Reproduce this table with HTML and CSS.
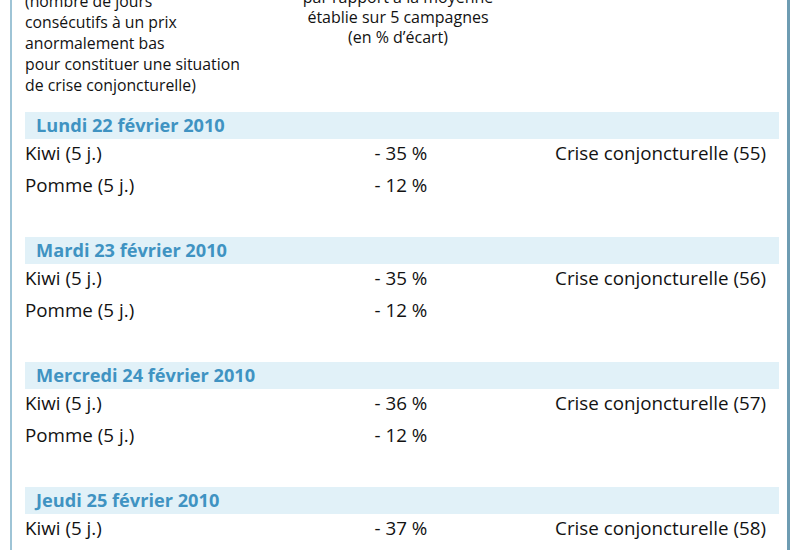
FILE: index.html
```html
<!DOCTYPE html>
<html lang="fr">
<head>
<meta charset="utf-8">
<link rel="stylesheet" href="styles.css">
</head>
<body>
<div class="frame">
  <div class="head">
    <div class="h-left">
      <div>(nombre de jours</div>
      <div>consécutifs à un prix</div>
      <div>anormalement bas</div>
      <div>pour constituer une situation</div>
      <div>de crise conjoncturelle)</div>
    </div>
    <div class="h-mid">
      <div>par rapport à la moyenne</div>
      <div>établie sur 5 campagnes</div>
      <div>(en % d’écart)</div>
    </div>
    <div class="h-right"></div>
  </div>

  <section class="day">
    <div class="band">Lundi 22 février 2010</div>
    <div class="row"><span>Kiwi (5 j.)</span><span class="pct">- 35 %</span><span class="st">Crise conjoncturelle (55)</span></div>
    <div class="row"><span>Pomme (5 j.)</span><span class="pct">- 12 %</span><span class="st"></span></div>
  </section>
  <section class="day">
    <div class="band">Mardi 23 février 2010</div>
    <div class="row"><span>Kiwi (5 j.)</span><span class="pct">- 35 %</span><span class="st">Crise conjoncturelle (56)</span></div>
    <div class="row"><span>Pomme (5 j.)</span><span class="pct">- 12 %</span><span class="st"></span></div>
  </section>
  <section class="day">
    <div class="band">Mercredi 24 février 2010</div>
    <div class="row"><span>Kiwi (5 j.)</span><span class="pct">- 36 %</span><span class="st">Crise conjoncturelle (57)</span></div>
    <div class="row"><span>Pomme (5 j.)</span><span class="pct">- 12 %</span><span class="st"></span></div>
  </section>
  <section class="day">
    <div class="band">Jeudi 25 février 2010</div>
    <div class="row"><span>Kiwi (5 j.)</span><span class="pct">- 37 %</span><span class="st">Crise conjoncturelle (58)</span></div>
    <div class="row"><span>Pomme (5 j.)</span><span class="pct">- 12 %</span><span class="st"></span></div>
  </section>
</div>
</body>
</html>
```
FILE: styles.css
```css
html, body {
  margin: 0;
  padding: 0;
  background: #ffffff;
  overflow: hidden;
}
body {
  font-family: "Open Sans", "Liberation Sans", sans-serif;
  color: #121212;
}
.frame {
  margin-left: 10px;
  width: 780px;
  height: 600px;
  border-left: 2px solid #9ec4d6;
  border-right: 3px solid #6e9cb2;
  padding: 0 8px 0 13px;
  box-sizing: border-box;
}
.head {
  display: grid;
  grid-template-columns: 260px 240px 1fr;
  margin-top: -9px;
  font-size: 15.8px;
  line-height: 21px;
  height: 121px;
  font-weight: 500;
}
.h-mid {
  text-align: center;
  margin-top: -4px;
  line-height: 20px;
  font-size: 16px;
  transform: translateX(-7px);
}
.day {
  height: 125px;
}
.band {
  height: 27px;
  background: #e1f1f8;
  color: #3f93c2;
  font-weight: 700;
  font-size: 18.2px;
  line-height: 27px;
  padding-left: 11px;
}
.row {
  display: grid;
  grid-template-columns: 300px 150px 1fr;
  height: 31.5px;
  line-height: 29px;
  font-size: 18.8px;
  font-weight: 500;
}
.pct {
  text-align: center;
  padding-left: 2px;
}
.st {
  text-align: right;
  padding-right: 13px;
}
```
